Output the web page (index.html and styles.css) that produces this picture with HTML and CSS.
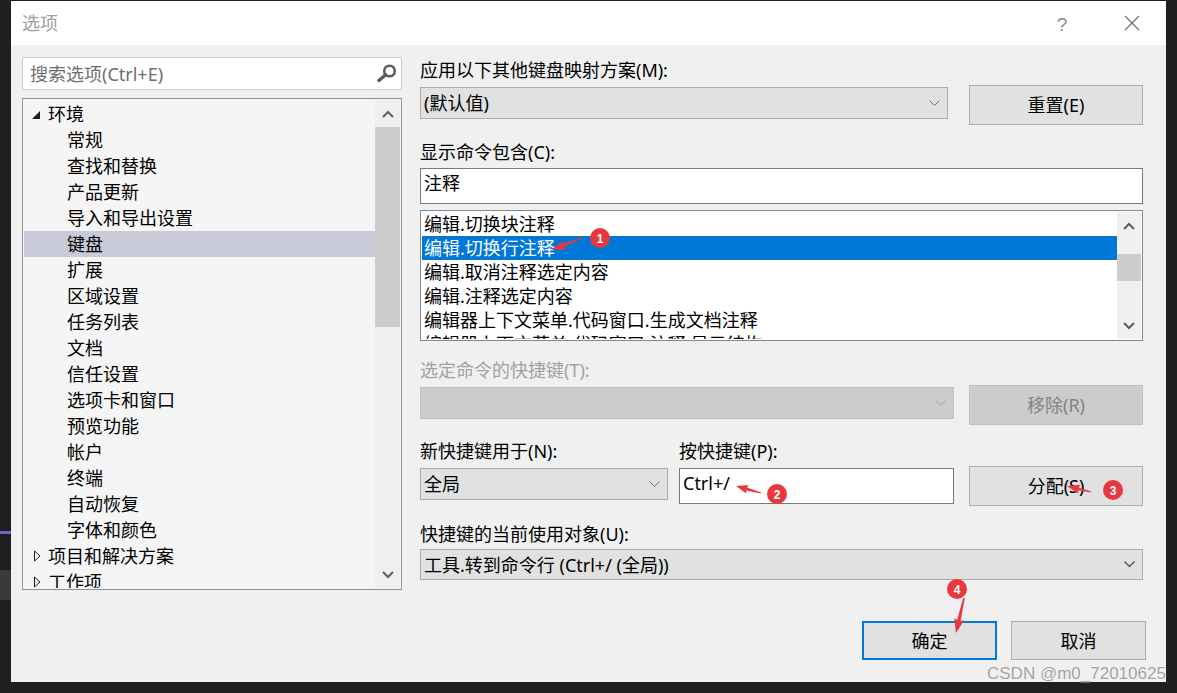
FILE: index.html
```html
<!DOCTYPE html>
<html lang="zh-CN">
<head>
<meta charset="utf-8">
<title>选项</title>
<link rel="stylesheet" href="styles.css">
</head>
<body>
<div class="desk">
  <div class="desk-line"></div>
  <div class="desk-block"></div>
  <div class="dialog">
    <div class="titlebar">
      <span class="title">选项</span>
      <span class="help">?</span>
      <svg class="close" width="16" height="16" viewBox="0 0 16 16"><path d="M1 1 L15 15 M15 1 L1 15" stroke="#6a6a6a" stroke-width="1.1" fill="none"/></svg>
    </div>
    <div class="content">
      <div class="left">
        <div class="search">
          <span class="placeholder">搜索选项(Ctrl+E)</span>
          <svg class="search-icon" width="21" height="18" viewBox="0 0 21 18"><circle cx="13.5" cy="7" r="5.3" fill="none" stroke="#5a5a5a" stroke-width="2.6"/><path d="M9.6 10.8 L3 16.5" stroke="#5a5a5a" stroke-width="3.4" stroke-linecap="round"/></svg>
        </div>
        <div class="tree">
          <div class="tree-items">
            <div class="node parent"><svg class="tri" width="8" height="8" viewBox="0 0 8 8"><polygon points="8,0 8,8 0,8" fill="#1e1e1e"/></svg><span>环境</span></div>
            <div class="node child">常规</div>
            <div class="node child">查找和替换</div>
            <div class="node child">产品更新</div>
            <div class="node child">导入和导出设置</div>
            <div class="node child sel">键盘</div>
            <div class="node child">扩展</div>
            <div class="node child">区域设置</div>
            <div class="node child">任务列表</div>
            <div class="node child">文档</div>
            <div class="node child">信任设置</div>
            <div class="node child">选项卡和窗口</div>
            <div class="node child">预览功能</div>
            <div class="node child">帐户</div>
            <div class="node child">终端</div>
            <div class="node child">自动恢复</div>
            <div class="node child">字体和颜色</div>
            <div class="node collapsed"><svg class="tri-o" width="8" height="12" viewBox="0 0 8 12"><polygon points="1.5,1 7,6 1.5,11" fill="none" stroke="#1e1e1e" stroke-width="1"/></svg><span>项目和解决方案</span></div>
            <div class="node collapsed"><svg class="tri-o" width="8" height="12" viewBox="0 0 8 12"><polygon points="1.5,1 7,6 1.5,11" fill="none" stroke="#1e1e1e" stroke-width="1"/></svg><span>工作项</span></div>
          </div>
          <div class="tree-scroll">
            <div class="sb-btn"><svg width="12" height="8" viewBox="0 0 12 8"><polyline points="1,7 6,2 11,7" fill="none" stroke="#5f5f5f" stroke-width="2"/></svg></div>
            <div class="tree-thumb"></div>
            <div class="sb-fill"></div>
            <div class="sb-btn"><svg width="12" height="8" viewBox="0 0 12 8"><polyline points="1,1 6,6 11,1" fill="none" stroke="#5f5f5f" stroke-width="2"/></svg></div>
          </div>
        </div>
      </div>

      <div class="right">
        <div class="lbl lbl-first">应用以下其他键盘映射方案(M):</div>
        <div class="row">
          <div class="select sel-scheme"><span>(默认值)</span><svg class="chev" width="11" height="6" viewBox="0 0 11 6"><polyline points="0.5,0.5 5.5,5.5 10.5,0.5" fill="none" stroke="#707070" stroke-width="1"/></svg></div>
          <div class="btn">重置(E)</div>
        </div>

        <div class="lbl lbl-gap">显示命令包含(C):</div>
        <div class="input input-wide">注释</div>

        <div class="list">
          <div class="list-items">
            <div class="item">编辑.切换块注释</div>
            <div class="item sel">编辑.切换行注释</div>
            <div class="item">编辑.取消注释选定内容</div>
            <div class="item">编辑.注释选定内容</div>
            <div class="item">编辑器上下文菜单.代码窗口.生成文档注释</div>
            <div class="item">编辑器上下文菜单.代码窗口.注释.显示结构</div>
          </div>
          <div class="list-scroll">
            <div class="sb-btn"><svg width="12" height="8" viewBox="0 0 12 8"><polyline points="1,7 6,2 11,7" fill="none" stroke="#5f5f5f" stroke-width="2"/></svg></div>
            <div class="list-thumb"></div>
            <div class="sb-fill"></div>
            <div class="sb-btn"><svg width="12" height="8" viewBox="0 0 12 8"><polyline points="1,1 6,6 11,1" fill="none" stroke="#5f5f5f" stroke-width="2"/></svg></div>
          </div>
        </div>

        <div class="lbl lbl-disabled">选定命令的快捷键(T):</div>
        <div class="row">
          <div class="select disabled sel-current"><span></span><svg class="chev" width="11" height="6" viewBox="0 0 11 6"><polyline points="0.5,0.5 5.5,5.5 10.5,0.5" fill="none" stroke="#a8a8a8" stroke-width="1"/></svg></div>
          <div class="btn disabled">移除(R)</div>
        </div>

        <div class="labels-row">
          <div class="lbl lbl-scope">新快捷键用于(N):</div>
          <div class="lbl">按快捷键(P):</div>
        </div>
        <div class="row">
          <div class="select sel-scope"><span>全局</span><svg class="chev" width="11" height="6" viewBox="0 0 11 6"><polyline points="0.5,0.5 5.5,5.5 10.5,0.5" fill="none" stroke="#707070" stroke-width="1"/></svg></div>
          <div class="input input-key">Ctrl+/</div>
          <div class="btn">分配(S)</div>
        </div>

        <div class="lbl lbl-used">快捷键的当前使用对象(U):</div>
        <div class="select sel-used"><span>工具.转到命令行 (Ctrl+/ (全局))</span><svg class="chev" width="11" height="7" viewBox="0 0 11 7"><polyline points="0.5,0.5 5.5,5.5 10.5,0.5" fill="none" stroke="#505050" stroke-width="1.3"/></svg></div>

        <div class="actions">
          <div class="btn btn-action btn-default">确定</div>
          <div class="btn btn-action">取消</div>
        </div>
      </div>
    </div>
  </div>

  <div class="watermark">CSDN @m0_72010625</div>

  <svg class="annot" width="1177" height="693" viewBox="0 0 1177 693">
    <g fill="#e8383d">
      <polygon transform="translate(582,238) rotate(158.2)" points="0,-0.6 20,-1.6 19,-4.8 32,0 19,4.8 20,1.6 0,0.6"/>
      <polygon transform="translate(761,493) rotate(-164.4)" points="0,-0.6 15,-1.5 14,-4.5 26,0 14,4.5 15,1.5 0,0.6"/>
      <polygon transform="translate(1091,492) rotate(-166)" points="0,-0.6 13,-1.5 12,-4.5 25,0 12,4.5 13,1.5 0,0.6"/>
      <polygon transform="translate(964,598) rotate(102.9)" points="0,-0.8 23,-1.8 22,-5 36,0 22,5 23,1.8 0,0.8"/>
      <circle cx="600" cy="238" r="10"/>
      <circle cx="777" cy="494" r="10"/>
      <circle cx="1113" cy="490" r="10"/>
      <circle cx="957" cy="589" r="10"/>
    </g>
    <g fill="#fff" font-family="Liberation Sans, Arial, sans-serif" font-size="12" font-weight="bold" text-anchor="middle">
      <text x="600" y="242.5">1</text>
      <text x="777" y="498.5">2</text>
      <text x="1113" y="494.5">3</text>
      <text x="957" y="593.5">4</text>
    </g>
  </svg>
</div>
</body>
</html>
```

FILE: styles.css
```css
* {
  box-sizing: border-box;
}

html,
body {
  margin: 0;
  padding: 0;
}

body {
  width: 1177px;
  height: 693px;
  overflow: hidden;
  background: #1f1f1f;
  font-family: "Noto Sans", "Noto Sans CJK SC", sans-serif;
  font-size: 18px;
  color: #000;
}

.desk {
  position: relative;
  width: 1177px;
  height: 693px;
  padding: 1px 0 0 11px;
}

.desk-line {
  position: absolute;
  left: 0;
  top: 531px;
  width: 11px;
  height: 3px;
  background: #6d62d6;
}

.desk-block {
  position: absolute;
  left: 0;
  top: 570px;
  width: 11px;
  height: 30px;
  background: #3a3a3a;
}

.dialog {
  width: 1155px;
  height: 681px;
  background: #f0f0f0;
  display: flex;
  flex-direction: column;
}

/* Title bar */
.titlebar {
  height: 44px;
  flex: none;
  background: #fff;
  display: flex;
  align-items: center;
  padding-left: 11px;
}

.title {
  color: #a0a0a0;
  line-height: 22px;
}

.help {
  margin-left: auto;
  width: 20px;
  text-align: center;
  color: #8c8c8c;
  font-family: "Liberation Sans", sans-serif;
  font-size: 19px;
  font-weight: 300;
  line-height: 22px;
  margin-top: 3px;
}

.close {
  margin-left: 52px;
  margin-right: 26px;
}

/* Content */
.content {
  display: flex;
  gap: 18px;
  padding: 12px 0 0 11px;
}

.left {
  width: 380px;
  flex: none;
}

.search {
  height: 33px;
  border: 1px solid #cacbdb;
  background: #fff;
  display: flex;
  align-items: center;
  padding: 0 4px 0 7px;
}

.placeholder {
  color: #6f6f6f;
  line-height: 22px;
}

.search-icon {
  margin-left: auto;
  margin-top: -2px;
}

.tree {
  margin-top: 8px;
  height: 492px;
  border: 1px solid #8e8f9f;
  background: #f5f5f5;
  display: flex;
  padding: 1px;
}

.tree-items {
  flex: 1;
  overflow: hidden;
  padding-top: 1px;
}

.node {
  height: 26px;
  line-height: 26px;
  white-space: nowrap;
  display: flex;
  align-items: center;
}

.parent {
  padding-left: 8px;
}

.parent .tri {
  margin-right: 8px;
  margin-top: 1px;
}

.collapsed {
  padding-left: 9px;
}

.collapsed .tri-o {
  margin-right: 7px;
}

.child {
  padding-left: 43px;
}

.node.sel {
  background: #c9cad8;
}

.tree-scroll {
  width: 25px;
  flex: none;
  background: #efefef;
  display: flex;
  flex-direction: column;
}

.sb-btn {
  height: 27px;
  flex: none;
  display: flex;
  align-items: center;
  justify-content: center;
}

.tree-thumb {
  height: 200px;
  flex: none;
  background: #cdcdcd;
}

.sb-fill {
  flex: 1;
}

/* Right column */
.right {
  width: 726px;
  flex: none;
  display: flex;
  flex-direction: column;
}

.lbl {
  height: 22px;
  line-height: 22px;
  white-space: nowrap;
}

.lbl-first {
  margin-top: 2px;
}

.lbl-gap {
  margin-top: 16px;
}

.lbl-disabled {
  margin-top: 18px;
  color: #a2a2a2;
}

.lbl-used {
  margin-top: 17px;
}

.row {
  margin-top: 4px;
  width: 723px;
  height: 40px;
  display: flex;
  align-items: flex-start;
}

.select {
  height: 32px;
  margin-top: 2px;
  background: #e1e1e1;
  border: 1px solid #adadad;
  display: flex;
  align-items: center;
  padding: 0 7px 0 3px;
  white-space: nowrap;
  line-height: 22px;
}

.select .chev {
  margin-left: auto;
}

.select.disabled {
  background: #cccccc;
  border-color: #bfbfbf;
}

.sel-scheme {
  width: 528px;
  margin-right: 21px;
}

.sel-current {
  width: 534px;
  margin-right: 15px;
}

.sel-scope {
  width: 248px;
  margin-right: 11px;
}

.sel-used {
  width: 723px;
  height: 31px;
  margin-top: 4px;
}

.btn {
  width: 174px;
  height: 40px;
  flex: none;
  background: #e1e1e1;
  border: 1px solid #adadad;
  display: flex;
  align-items: center;
  justify-content: center;
  line-height: 22px;
}

.btn.disabled {
  background: #cccccc;
  border-color: #bfbfbf;
  color: #838383;
}

.input {
  height: 36px;
  background: #fff;
  border: 1px solid #7a7a7a;
  padding-left: 3px;
  line-height: 28px;
  white-space: nowrap;
}

.input-wide {
  margin-top: 5px;
  width: 723px;
}

.input-key {
  width: 275px;
  margin-top: 2px;
  margin-right: 15px;
}

.list {
  margin-top: 6px;
  width: 723px;
  height: 131px;
  border: 1px solid #828790;
  background: #fff;
  padding: 1px;
  display: flex;
}

.list-items {
  flex: 1;
  overflow: hidden;
}

.item {
  height: 24px;
  line-height: 24px;
  padding-left: 2px;
  white-space: nowrap;
}

.item.sel {
  background: #0078d7;
  color: #fff;
}

.list-scroll {
  width: 24px;
  flex: none;
  background: #f0f0f0;
  display: flex;
  flex-direction: column;
}

.list-thumb {
  margin-top: 15px;
  height: 27px;
  flex: none;
  background: #cdcdcd;
}

.labels-row {
  margin-top: 15px;
  display: flex;
}

.lbl-scope {
  width: 259px;
}

.actions {
  margin-top: 41px;
  display: flex;
  justify-content: flex-end;
  gap: 14px;
}

.btn-action {
  width: 135px;
  height: 39px;
}

.btn-default {
  border: 2px solid #0078d7;
}

.watermark {
  position: absolute;
  left: 987px;
  top: 664px;
  font-family: "Liberation Sans", Arial, sans-serif;
  font-size: 17px;
  line-height: 20px;
  color: rgba(150, 150, 150, 0.9);
  text-shadow: 0 0 1px rgba(255, 255, 255, 0.9);
  white-space: nowrap;
}

.annot {
  position: absolute;
  left: 0;
  top: 0;
  pointer-events: none;
}
```
